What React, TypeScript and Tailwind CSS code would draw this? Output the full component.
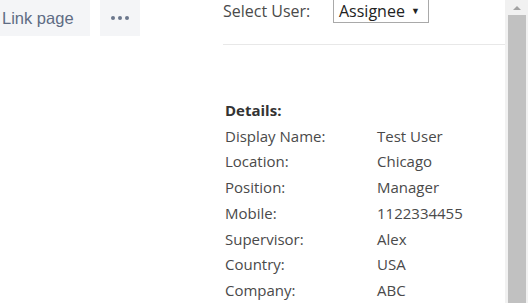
import React from "react";

const rows: [string, string][] = [
  ["Display Name:", "Test User"],
  ["Location:", "Chicago"],
  ["Position:", "Manager"],
  ["Mobile:", "1122334455"],
  ["Supervisor:", "Alex"],
  ["Country:", "USA"],
  ["Company:", "ABC"],
];

export default function App() {
  return (
    <div className="flex w-[532px] h-[303px] overflow-hidden bg-white">
      <div className="w-[215px] shrink-0 flex items-start gap-[10px]">
        <button className="h-[36px] w-[90px] bg-[#f4f5f7] text-[#5e6c84] text-[16.5px] text-left pl-[2px] font-['Liberation_Sans',Arial,sans-serif] leading-none">
          Link page
        </button>
        <button className="h-[36px] w-[40px] bg-[#f4f5f7] flex items-center justify-center gap-[3px]">
          <span className="w-[4px] h-[4px] rounded-full bg-[#6b778c]" />
          <span className="w-[4px] h-[4px] rounded-full bg-[#6b778c]" />
          <span className="w-[4px] h-[4px] rounded-full bg-[#6b778c]" />
        </button>
      </div>
      <div className="flex-1 pl-[8px] font-['Open_Sans',sans-serif] text-[#4a4a4a]">
        <div className="flex items-center h-[24px] text-[16px] leading-[24px] -mt-[1px]">
          <span className="w-[110px]">Select User:</span>
          <div className="h-[24px] w-[96px] border border-[#a9a9a9] flex items-center pl-[5px] text-[#222]">
            <span>Assignee</span>
            <span className="ml-[6px] text-[9px]">▼</span>
          </div>
        </div>
        <div className="mt-[21px] border-t border-[#e8e8e8]" />
        <div className="mt-[53px] pl-[2px] text-[15px] leading-[25.7px]">
          <div className="font-bold text-[#333]">Details:</div>
          {rows.map(([k, v]) => (
            <div key={k} className="grid grid-cols-[152px_1fr]">
              <span>{k}</span>
              <span>{v}</span>
            </div>
          ))}
        </div>
      </div>
      <div className="w-[23px] shrink-0 bg-[#f1f1f1] flex flex-col items-center">
        <div className="h-[15px] w-full flex items-center justify-center">
          <div className="w-0 h-0 border-l-[4px] border-r-[4px] border-b-[4px] border-l-transparent border-r-transparent border-b-[#a3a3a3]" />
        </div>
        <div className="flex-1 w-[18px] bg-[#c1c1c1]" />
      </div>
      <div className="w-[4px] shrink-0" />
    </div>
  );
}
